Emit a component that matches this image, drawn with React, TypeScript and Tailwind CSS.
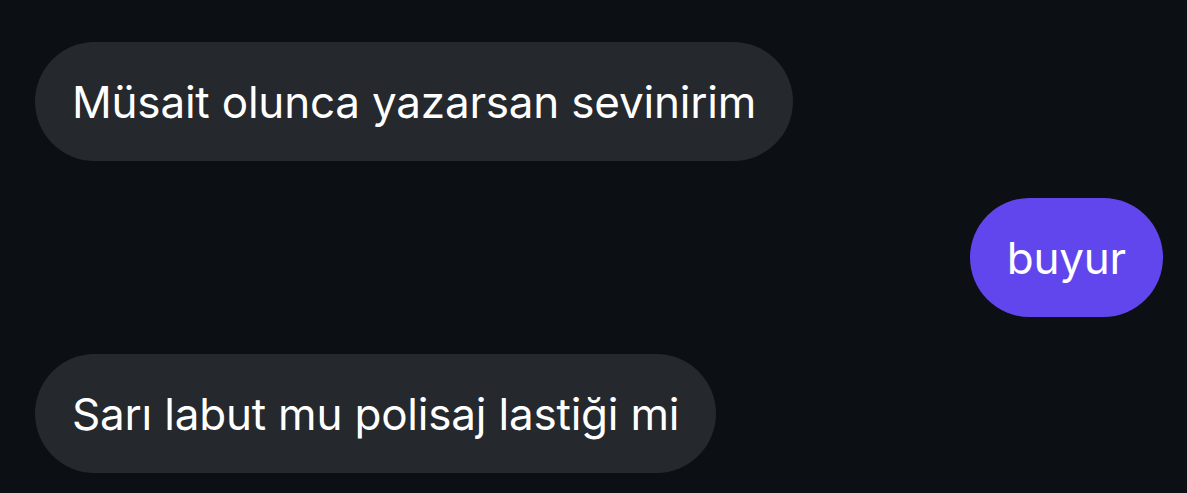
import React from "react";

type Msg = { text: string; mine?: boolean };

const messages: Msg[] = [
  { text: "Müsait olunca yazarsan sevinirim" },
  { text: "buyur", mine: true },
  { text: "Sarı labut mu polisaj lastiği mi" },
];

export default function App() {
  return (
    <main
      className="w-[1187px] h-[493px] bg-[#0c0f13] overflow-hidden"
      style={{ fontFamily: "Inter, 'Noto Sans', sans-serif" }}
    >
      <div className="flex flex-col gap-[37px] pt-[42px] pl-[35px] pr-[24px]">
        {messages.map((m, i) => (
          <div key={i} className={"flex " + (m.mine ? "justify-end" : "justify-start")}>
            <div
              className={
                (m.mine ? "bg-[#6146ee] " : "bg-[#25282d] ") +
                "h-[119px] flex items-center px-[37px] rounded-full text-white text-[44px] tracking-[-0.2px] whitespace-nowrap"
              }
            >
              {m.text}
            </div>
          </div>
        ))}
      </div>
    </main>
  );
}
